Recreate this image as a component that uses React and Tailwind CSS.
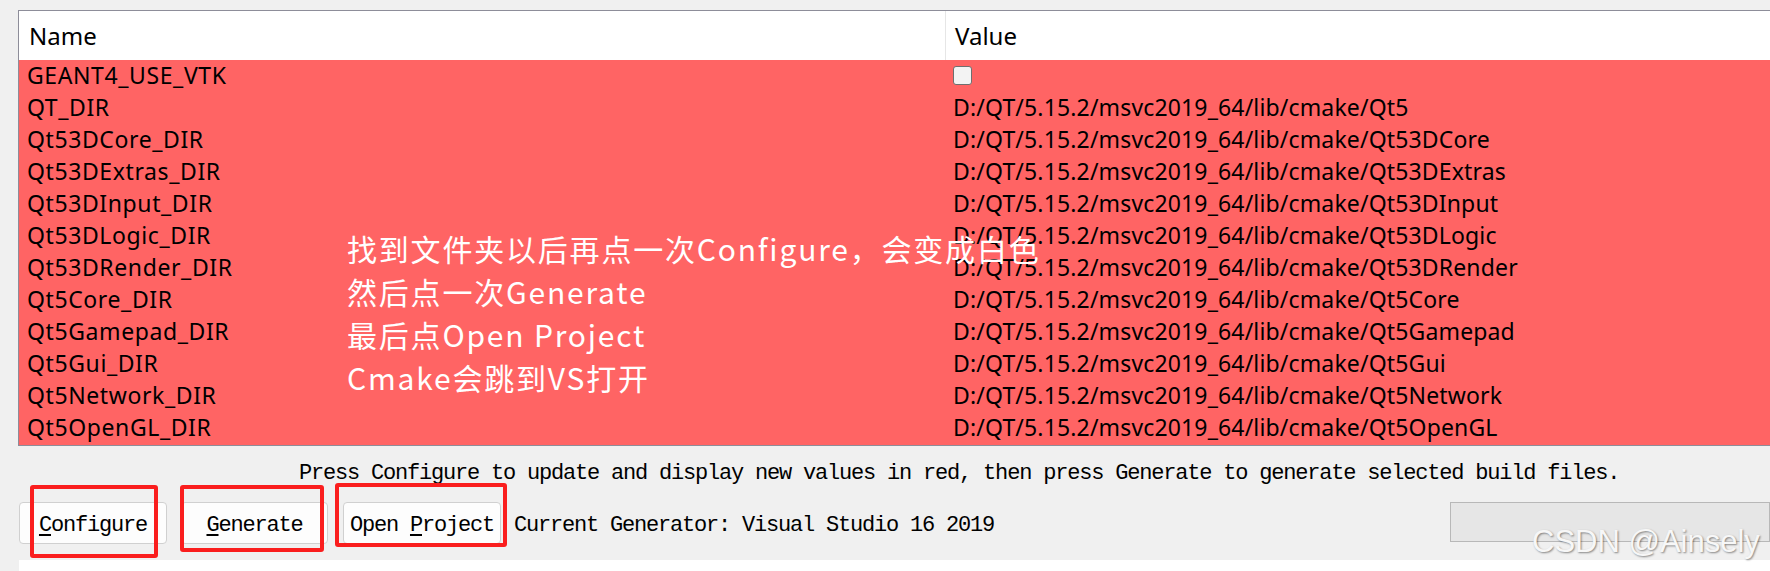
const rows = [
  ["GEANT4_USE_VTK", null],
  ["QT_DIR", "D:/QT/5.15.2/msvc2019_64/lib/cmake/Qt5"],
  ["Qt53DCore_DIR", "D:/QT/5.15.2/msvc2019_64/lib/cmake/Qt53DCore"],
  ["Qt53DExtras_DIR", "D:/QT/5.15.2/msvc2019_64/lib/cmake/Qt53DExtras"],
  ["Qt53DInput_DIR", "D:/QT/5.15.2/msvc2019_64/lib/cmake/Qt53DInput"],
  ["Qt53DLogic_DIR", "D:/QT/5.15.2/msvc2019_64/lib/cmake/Qt53DLogic"],
  ["Qt53DRender_DIR", "D:/QT/5.15.2/msvc2019_64/lib/cmake/Qt53DRender"],
  ["Qt5Core_DIR", "D:/QT/5.15.2/msvc2019_64/lib/cmake/Qt5Core"],
  ["Qt5Gamepad_DIR", "D:/QT/5.15.2/msvc2019_64/lib/cmake/Qt5Gamepad"],
  ["Qt5Gui_DIR", "D:/QT/5.15.2/msvc2019_64/lib/cmake/Qt5Gui"],
  ["Qt5Network_DIR", "D:/QT/5.15.2/msvc2019_64/lib/cmake/Qt5Network"],
  ["Qt5OpenGL_DIR", "D:/QT/5.15.2/msvc2019_64/lib/cmake/Qt5OpenGL"],
];

const mono = "font-['Liberation_Mono',monospace] text-[22px] tracking-[-1.2px] leading-[30px] text-black";

function QtButton({ width, children }) {
  return (
    <button className={`h-[42px] ${width} shrink-0 flex justify-center pt-[8px] rounded-[4px] border border-[#d0d0d0] bg-[#fdfdfd] ${mono}`}>
      {children}
    </button>
  );
}

export default function App() {
  return (
    <div className="relative w-[1770px] h-[571px] overflow-hidden bg-[#f0f0f0]">
      {/* cache table */}
      <div className="pt-[10px] pl-[18px]">
        <div className="border-l border-t border-b border-[#8d8d99] bg-white font-['Noto_Sans',sans-serif] text-black">
          <div className="flex h-[49px]">
            <div className="w-[926px] shrink-0 pl-[10px] text-[24px] leading-[49px]">Name</div>
            <div className="flex-1 border-l border-[#e6e6e6] pl-[9px] text-[24px] leading-[49px]">Value</div>
          </div>
          <div className="bg-[#ff6464] pb-[1px]">
            {rows.map(([name, value]) => (
              <div key={name} className="flex h-[32px] text-[23px] leading-[30px]">
                <div className="w-[926px] shrink-0 pl-[8px] tracking-[0.6px] whitespace-nowrap">{name}</div>
                <div className="flex-1 pl-[8px] tracking-[0.15px] whitespace-nowrap">
                  {value ?? (
                    <div className="mt-[6px] w-[19px] h-[19px] rounded-[3px] border border-[#6f6f6f] bg-[#f3f3f3]" />
                  )}
                </div>
              </div>
            ))}
          </div>
        </div>
      </div>

      <div className={`mt-[13px] pl-[299px] whitespace-nowrap ${mono}`}>
        Press Configure to update and display new values in red, then press Generate to generate selected build files.
      </div>

      <div className="mt-[13px] pl-[19px] flex items-start">
        <QtButton width="w-[148px]">
          <span><u className="underline-offset-[3px]">C</u>onfigure</span>
        </QtButton>
        <div className="w-[14px]" />
        <QtButton width="w-[147px]">
          <span><u className="underline-offset-[3px]">G</u>enerate</span>
        </QtButton>
        <div className="w-[15px]" />
        <QtButton width="w-[158px]">
          <span>Open <u className="underline-offset-[3px]">P</u>roject</span>
        </QtButton>
        <div className={`ml-[13px] pt-[9px] whitespace-nowrap ${mono}`}>Current Generator: Visual Studio 16 2019</div>
        <div className="ml-auto w-[320px] shrink-0 h-[40px] border border-[#b8b8b8] bg-[#e6e6e6]" />
      </div>

      <div className="absolute left-[19px] right-0 top-[560px] bottom-0 bg-white" />

      {/* annotation */}
      <div className="absolute left-[347px] top-[227px] text-white font-['Noto_Sans_CJK_SC',sans-serif] text-[30px] leading-[43px] tracking-[1.8px] whitespace-nowrap">
        <div>找到文件夹以后再点一次Configure，会变成白色</div>
        <div>然后点一次Generate</div>
        <div>最后点Open Project</div>
        <div>Cmake会跳到VS打开</div>
      </div>

      <div className="absolute left-[30px] top-[485px] w-[128px] h-[73px] border-[4.5px] border-[#fa1e1e] rounded-[3px]" />
      <div className="absolute left-[180px] top-[485px] w-[144px] h-[67px] border-[4.5px] border-[#fa1e1e] rounded-[3px]" />
      <div className="absolute left-[335px] top-[483px] w-[172px] h-[64px] border-[4.5px] border-[#fa1e1e] rounded-[3px]" />

      <div className="absolute left-[1532px] top-[526px] font-['Liberation_Sans',sans-serif] text-[31px] leading-[31px] text-[#f7f7f7] whitespace-nowrap [text-shadow:1px_1px_2px_rgba(0,0,0,0.45)]">
        CSDN @Ainsely
      </div>
    </div>
  );
}
